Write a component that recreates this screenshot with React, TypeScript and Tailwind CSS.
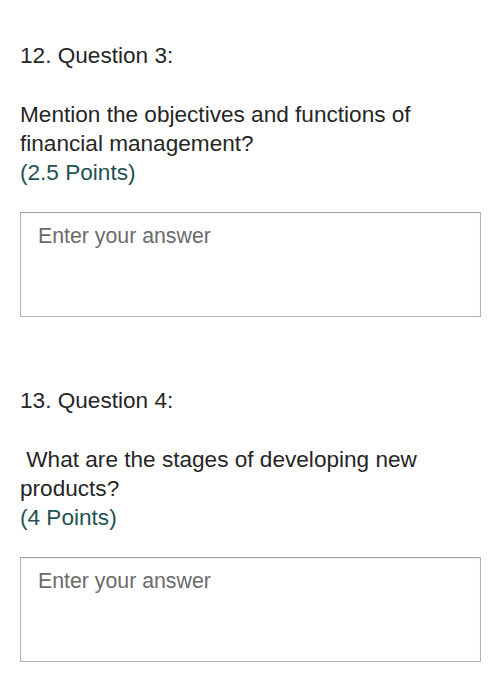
const questions = [
    { no: 12, label: "Question 3:", text: "Mention the objectives and functions of financial management?", points: "(2.5 Points)" },
    { no: 13, label: "Question 4:", text: "\u00a0What are the stages of developing new products?", points: "(4 Points)" },
]

function QuestionBlock({ no, label, text, points }: { no: number; label: string; text: string; points: string }) {
    return (
        <div>
            <div className="text-[22.6px] leading-[29px] text-[#262626]">
                {no}. {label}
            </div>
            <div className="mt-[30px] text-[22.6px] leading-[29px] text-[#262626] pr-[50px]">{text}</div>
            <div className="text-[22.6px] leading-[29px] text-[#1f5252]">{points}</div>
            {/* answer box */}
            <textarea
                className="mt-[25px] block w-full h-[105px] resize-none border border-[#b3b3b3] border-t-[#a3a3a3] bg-white pl-[17px] pt-[9px] text-[21.3px] leading-[28px] text-[#262626] placeholder:text-[#6b6b6b] outline-none shadow-[inset_0_1px_2px_rgba(0,0,0,0.06)]"
                placeholder="Enter your answer"
            />
        </div>
    )
}

export default function App() {
    return (
        <div className="min-h-[700px] bg-white px-[20px] pt-[41px]" style={{ fontFamily: '"Liberation Sans", Arial, sans-serif' }}>
            <div className="flex flex-col gap-[69px]">
                {questions.map((q) => (
                    <QuestionBlock key={q.no} {...q} />
                ))}
            </div>
        </div>
    )
}
